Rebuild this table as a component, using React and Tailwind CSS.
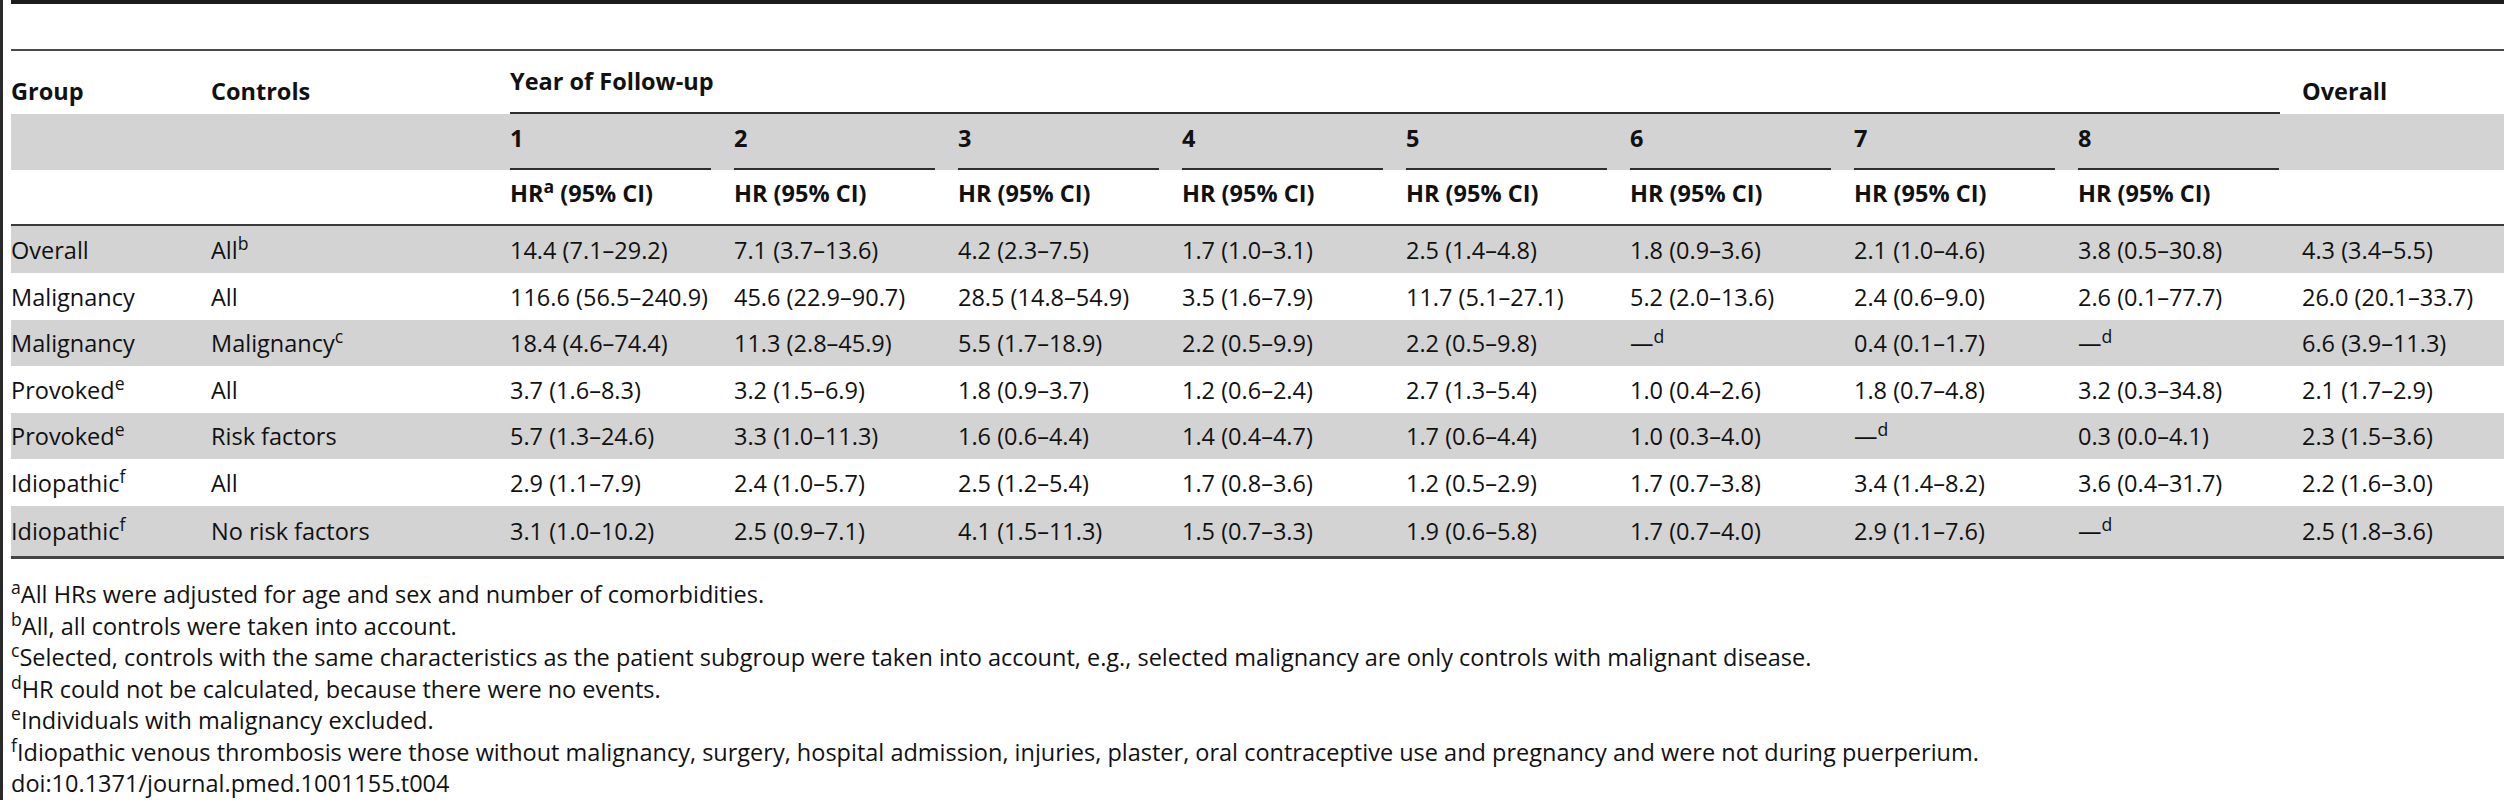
import React from "react";

const rows = [
  ["Overall", null, "All", "b", ["14.4 (7.1–29.2)", "7.1 (3.7–13.6)", "4.2 (2.3–7.5)", "1.7 (1.0–3.1)", "2.5 (1.4–4.8)", "1.8 (0.9–3.6)", "2.1 (1.0–4.6)", "3.8 (0.5–30.8)", "4.3 (3.4–5.5)"]],
  ["Malignancy", null, "All", null, ["116.6 (56.5–240.9)", "45.6 (22.9–90.7)", "28.5 (14.8–54.9)", "3.5 (1.6–7.9)", "11.7 (5.1–27.1)", "5.2 (2.0–13.6)", "2.4 (0.6–9.0)", "2.6 (0.1–77.7)", "26.0 (20.1–33.7)"]],
  ["Malignancy", null, "Malignancy", "c", ["18.4 (4.6–74.4)", "11.3 (2.8–45.9)", "5.5 (1.7–18.9)", "2.2 (0.5–9.9)", "2.2 (0.5–9.8)", "D", "0.4 (0.1–1.7)", "D", "6.6 (3.9–11.3)"]],
  ["Provoked", "e", "All", null, ["3.7 (1.6–8.3)", "3.2 (1.5–6.9)", "1.8 (0.9–3.7)", "1.2 (0.6–2.4)", "2.7 (1.3–5.4)", "1.0 (0.4–2.6)", "1.8 (0.7–4.8)", "3.2 (0.3–34.8)", "2.1 (1.7–2.9)"]],
  ["Provoked", "e", "Risk factors", null, ["5.7 (1.3–24.6)", "3.3 (1.0–11.3)", "1.6 (0.6–4.4)", "1.4 (0.4–4.7)", "1.7 (0.6–4.4)", "1.0 (0.3–4.0)", "D", "0.3 (0.0–4.1)", "2.3 (1.5–3.6)"]],
  ["Idiopathic", "f", "All", null, ["2.9 (1.1–7.9)", "2.4 (1.0–5.7)", "2.5 (1.2–5.4)", "1.7 (0.8–3.6)", "1.2 (0.5–2.9)", "1.7 (0.7–3.8)", "3.4 (1.4–8.2)", "3.6 (0.4–31.7)", "2.2 (1.6–3.0)"]],
  ["Idiopathic", "f", "No risk factors", null, ["3.1 (1.0–10.2)", "2.5 (0.9–7.1)", "4.1 (1.5–11.3)", "1.5 (0.7–3.3)", "1.9 (0.6–5.8)", "1.7 (0.7–4.0)", "2.9 (1.1–7.6)", "D", "2.5 (1.8–3.6)"]],
];

const rowClasses = [
  "h-[47px] bg-[#d3d3d3]",
  "h-[47px] bg-white",
  "h-[46px] bg-[#d3d3d3]",
  "h-[47px] bg-white",
  "h-[46px] bg-[#d3d3d3]",
  "h-[47px] bg-white",
  "h-[50px] bg-[#d3d3d3]",
];

const footnotes = [
  ["a", "All HRs were adjusted for age and sex and number of comorbidities."],
  ["b", "All, all controls were taken into account."],
  ["c", "Selected, controls with the same characteristics as the patient subgroup were taken into account, e.g., selected malignancy are only controls with malignant disease."],
  ["d", "HR could not be calculated, because there were no events."],
  ["e", "Individuals with malignancy excluded."],
  ["f", "Idiopathic venous thrombosis were those without malignancy, surgery, hospital admission, injuries, plaster, oral contraceptive use and pregnancy and were not during puerperium."],
];

const grid = "grid grid-cols-[200px_299px_repeat(8,224px)_1fr]";

function Cell({ v }) {
  if (v === "D") {
    return (
      <span>
        —<sup>d</sup>
      </span>
    );
  }
  return <span>{v}</span>;
}

export default function App() {
  const years = [1, 2, 3, 4, 5, 6, 7, 8];
  return (
    <div className="flex w-[2504px] h-[800px] bg-white text-[#111] font-['Open_Sans',sans-serif] text-[23.5px] leading-[32px] overflow-hidden">
      <div className="w-[3px] bg-[#2a2a2a]" />
      <div className="ml-[8px] flex-1 flex flex-col">
        <div className="h-[4px] bg-[#1c1c1c]" />
        <div className="h-[45px]" />
        <div className="h-[2px] bg-[#4a4a4a]" />

        {/* header row 1 */}
        <div className={`${grid} h-[63px] font-bold`}>
          <div className="pt-[24px]">Group</div>
          <div className="pt-[24px]">Controls</div>
          <div className="col-span-8 pr-[22px]">
            <div className="pt-[14px] pb-[15px] border-b-2 border-[#2e2e2e]">Year of Follow-up</div>
          </div>
          <div className="pt-[24px]">Overall</div>
        </div>

        {/* header row 2 */}
        <div className={`${grid} h-[56px] bg-[#d3d3d3] font-bold`}>
          <div />
          <div />
          {years.map((y) => (
            <div key={y} className="pr-[23px]">
              <div className="pt-[8px] pb-[14px] border-b-2 border-[#2e2e2e]">{y}</div>
            </div>
          ))}
          <div />
        </div>

        {/* header row 3 */}
        <div className={`${grid} h-[56px] bg-white font-bold border-b-2 border-[#3a3a3a]`}>
          <div />
          <div />
          {years.map((y) => (
            <div key={y} className="pt-[7px]">
              {y === 1 ? (
                <span>
                  HR<sup>a</sup> (95% CI)
                </span>
              ) : (
                <span>HR (95% CI)</span>
              )}
            </div>
          ))}
          <div />
        </div>

        {/* data rows */}
        {rows.map((r, i) => (
          <div key={i} className={`${grid} ${rowClasses[i]} items-center`}>
            <div>
              {r[0]}
              {r[1] && <sup>{r[1]}</sup>}
            </div>
            <div>
              {r[2]}
              {r[3] && <sup>{r[3]}</sup>}
            </div>
            {r[4].map((v, j) => (
              <div key={j}>
                <Cell v={v} />
              </div>
            ))}
          </div>
        ))}
        <div className="h-[3px] bg-[#444]" />

        {/* footnotes */}
        <div className="mt-[20px] leading-[31.5px]">
          {footnotes.map(([k, t]) => (
            <div key={k}>
              <sup>{k}</sup>
              {t}
            </div>
          ))}
          <div>doi:10.1371/journal.pmed.1001155.t004</div>
        </div>
      </div>
    </div>
  );
}
